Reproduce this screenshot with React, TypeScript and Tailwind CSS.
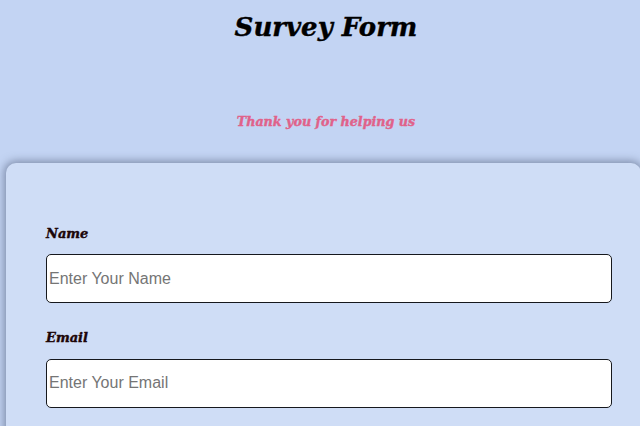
export default function App() {
  const display = "font-['DejaVu_Serif',serif] italic font-bold [-webkit-text-stroke-width:0.4px]";
  const field =
    "block h-[49px] w-[566px] rounded-[5px] border border-[#16181d] bg-white px-[2px] font-['Liberation_Sans',sans-serif] text-[16px] placeholder:text-[#757575]";
  return (
    <div className="h-[426px] w-[640px] overflow-hidden bg-[#c3d4f3]">
      <header className="h-[163px] pl-[12px] pt-[9px] text-center">
        <h1 className={`${display} text-[26px] leading-[36px] text-black`}>Survey Form</h1>
        <p className={`${display} mt-[67px] text-[12.7px] leading-[20px] text-[#e0628a]`}>Thank you for helping us</p>
      </header>
      <form className="ml-[6px] mr-[-1px] h-[400px] rounded-[10px] bg-[#cfddf6] px-[40px] pt-[61px] shadow-[0_0_8px_2px_rgba(70,80,110,0.55)]">
        <label className={`${display} block text-[13px] leading-[20px] text-[#1c0508]`}>Name</label>
        <input placeholder="Enter Your Name" className={`mt-[10px] ${field}`} />
        <label className={`${display} mt-[25px] block text-[13px] leading-[20px] text-[#1c0508]`}>Email</label>
        <input placeholder="Enter Your Email" className={`mt-[11px] pb-[2px] ${field}`} />
      </form>
    </div>
  );
}
